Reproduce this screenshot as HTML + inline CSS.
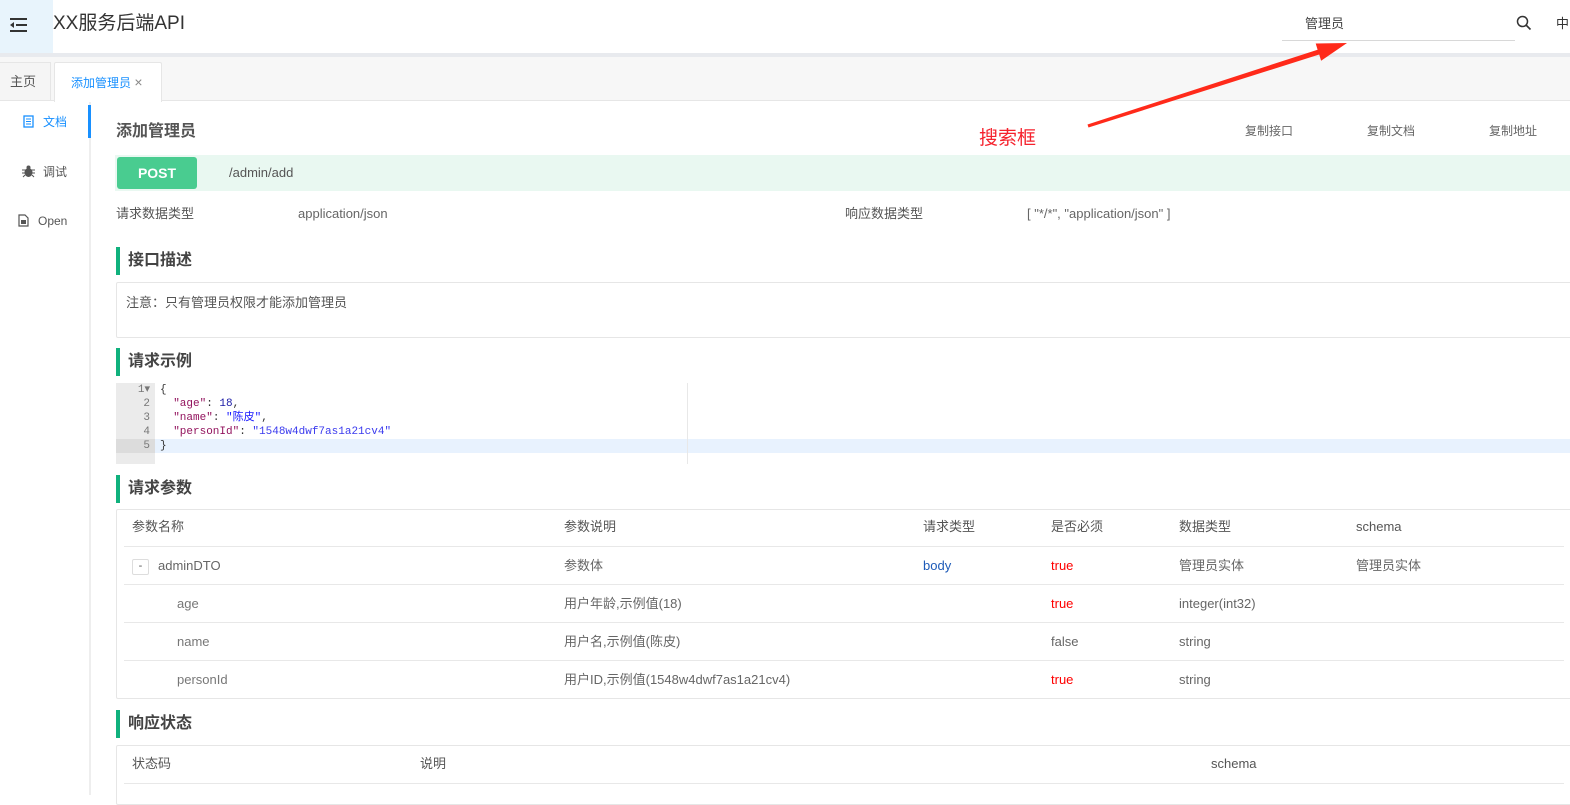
<!DOCTYPE html>
<html><head><meta charset="utf-8">
<style>
*{margin:0;padding:0;box-sizing:border-box}
body{width:1570px;height:795px;overflow:hidden;background:#fff;font-family:"Liberation Sans","Noto Sans CJK SC",sans-serif;color:#555;font-size:13px;position:relative}
.a{position:absolute;white-space:nowrap;line-height:16px}
.h2{position:absolute;left:116px;height:28px;border-left:4px solid #10b17d;padding-left:8px;font-size:16px;font-weight:bold;color:#444;line-height:28px}
.box{position:absolute;left:116px;width:1460px;border:1px solid #e6e6e6;border-radius:2px}
.line{position:absolute;height:1px;background:#e8e8e8}
.code{font-family:"Liberation Mono","Noto Sans CJK SC",monospace;font-size:11px}
</style></head><body>
<!-- header -->
<div class="a" style="left:0;top:0;width:53px;height:54px;background:#e8f4fc"></div>
<svg class="a" style="left:10px;top:17px" width="18" height="16" viewBox="0 0 18 16"><rect x="0" y="1" width="17" height="2" fill="#333"/><rect x="6" y="7" width="11" height="2" fill="#333"/><rect x="0" y="13" width="17" height="2" fill="#333"/><path d="M0 8L4 5V11Z" fill="#333"/></svg>
<div class="a" style="left:53px;top:13px;font-size:19px;line-height:22px;color:#333">XX服务后端API</div>
<div class="a" style="left:1305px;top:16px;font-size:13px;color:#444">管理员</div>
<div class="line" style="left:1282px;top:40px;width:233px;background:#d8d8d8"></div>
<svg class="a" style="left:1516px;top:15px" width="16" height="16" viewBox="0 0 16 16"><circle cx="6.5" cy="6.5" r="5" fill="none" stroke="#333" stroke-width="1.5"/><path d="M10 10L14.5 14.5" stroke="#333" stroke-width="1.6"/></svg>
<div class="a" style="left:1556px;top:16px;font-size:13px;color:#333">中</div>
<div class="a" style="left:0;top:53px;width:1570px;height:4px;background:#e8eaee"></div>
<!-- tabs -->
<div class="a" style="left:0;top:57px;width:1570px;height:44px;background:#f7f7f7;border-bottom:1px solid #e6e6e6"></div>
<div class="a" style="left:0;top:62px;width:51px;height:39px;background:#f5f5f5;border:1px solid #e6e6e6;border-left:none;font-size:13px;color:#555;line-height:38px;padding-left:10px">主页</div>
<div class="a" style="left:54px;top:62px;width:108px;height:40px;background:#fff;border:1px solid #e6e6e6;border-bottom:none;border-radius:2px 2px 0 0;font-size:12px;color:#1890ff;line-height:38px;padding-left:16px">添加管理员 <span style="color:#888;font-size:14px">×</span></div>
<!-- sidebar -->
<div class="a" style="left:89px;top:102px;width:2px;height:693px;background:#eee"></div>
<div class="a" style="left:88px;top:105px;width:3px;height:33px;background:#1890ff"></div>
<svg class="a" style="left:23px;top:115px" width="11" height="13" viewBox="0 0 11 13"><rect x="1" y="1" width="9" height="11" fill="none" stroke="#1890ff" stroke-width="1.3"/><path d="M3 4H8M3 6.5H8M3 9H8" stroke="#1890ff"/></svg>
<div class="a" style="left:43px;top:114px;font-size:12px;color:#1890ff">文档</div>
<svg class="a" style="left:22px;top:165px" width="13" height="13" viewBox="0 0 13 13"><ellipse cx="6.5" cy="7.5" rx="4" ry="4.5" fill="#555"/><circle cx="6.5" cy="2.5" r="2" fill="#555"/><path d="M0 5H13M0 8H13M1 12L3 10M12 12L10 10" stroke="#555"/></svg>
<div class="a" style="left:43px;top:164px;font-size:12px;color:#555">调试</div>
<svg class="a" style="left:18px;top:214px" width="11" height="13" viewBox="0 0 11 13"><path d="M1 1H7L10 4V12H1Z" fill="none" stroke="#555" stroke-width="1.2"/><rect x="3" y="6" width="5" height="4" fill="#555"/></svg>
<div class="a" style="left:38px;top:213px;font-size:12px;color:#555">Open</div>
<!-- title -->
<div class="a" style="left:116px;top:122px;font-size:16px;line-height:20px;font-weight:bold;color:#555">添加管理员</div>
<div class="a" style="left:1245px;top:123px;font-size:12px;color:#666">复制接口</div>
<div class="a" style="left:1367px;top:123px;font-size:12px;color:#666">复制文档</div>
<div class="a" style="left:1489px;top:123px;font-size:12px;color:#666">复制地址</div>
<div class="a" style="left:979px;top:127px;font-size:19px;line-height:24px;color:#f5222d">搜索框</div>
<svg class="a" style="left:0;top:0" width="1570" height="795" viewBox="0 0 1570 795"><path d="M1087.5 124.5L1317.6 49.7L1315.7 43.5L1347 43L1321.1 60.7L1319.2 54.5L1088.5 127.5Z" fill="#ff2a1a"/></svg>
<!-- post bar -->
<div class="a" style="left:115px;top:155px;width:1455px;height:36px;background:#e9f8f1"></div>
<div class="a" style="left:117px;top:157px;width:80px;height:32px;background:#49cc90;border-radius:3px;color:#fff;font-weight:bold;font-size:14px;text-align:center;line-height:32px">POST</div>
<div class="a" style="left:229px;top:165px;font-size:13px;color:#555">/admin/add</div>
<div class="a" style="left:116px;top:206px;font-size:13px;color:#555">请求数据类型</div>
<div class="a" style="left:298px;top:206px;font-size:13px;color:#666">application/json</div>
<div class="a" style="left:845px;top:206px;font-size:13px;color:#555">响应数据类型</div>
<div class="a" style="left:1027px;top:206px;font-size:13px;color:#666">[ "*/*", "application/json" ]</div>
<!-- desc -->
<div class="h2" style="top:247px">接口描述</div>
<div class="box" style="top:282px;height:56px"></div>
<div class="a" style="left:126px;top:295px;font-size:13px;color:#555">注意：只有管理员权限才能添加管理员</div>
<!-- example -->
<div class="h2" style="top:348px">请求示例</div>
<div class="a" style="left:116px;top:383px;width:39px;height:81px;background:#ebebeb"></div>
<div class="a" style="left:116px;top:439px;width:1454px;height:14px;background:#e8f2fe"></div>
<div class="a" style="left:116px;top:439px;width:39px;height:14px;background:#dcdcdc"></div>
<div class="a" style="left:687px;top:383px;width:1px;height:81px;background:#e8e8e8"></div>
<div class="a code" style="left:116px;top:383px;width:34px;text-align:right;color:#777;line-height:14px">1▾<br>2<br>3<br>4<br>5</div>
<div class="a code" style="left:160px;top:383px;line-height:14px;color:#333">{<br>&nbsp;&nbsp;<span style="color:#92125d">"age"</span>: <span style="color:#1a1aa6">18</span>,<br>&nbsp;&nbsp;<span style="color:#92125d">"name"</span>: <span style="color:#1a1aff">"陈皮"</span>,<br>&nbsp;&nbsp;<span style="color:#92125d">"personId"</span>: <span style="color:#3a3aee">"1548w4dwf7as1a21cv4"</span><br>}</div>
<!-- params -->
<div class="h2" style="top:475px">请求参数</div>
<div class="box" style="top:509px;height:190px"></div>
<div class="line" style="left:124px;top:546px;width:1440px"></div>
<div class="line" style="left:124px;top:584px;width:1440px"></div>
<div class="line" style="left:124px;top:622px;width:1440px"></div>
<div class="line" style="left:124px;top:660px;width:1440px"></div>
<div class="a" style="left:132px;top:519px">参数名称</div>
<div class="a" style="left:564px;top:519px">参数说明</div>
<div class="a" style="left:923px;top:519px">请求类型</div>
<div class="a" style="left:1051px;top:519px">是否必须</div>
<div class="a" style="left:1179px;top:519px">数据类型</div>
<div class="a" style="left:1356px;top:519px">schema</div>
<div class="a" style="left:132px;top:559px;width:17px;height:16px;border:1px solid #ddd;border-radius:2px;text-align:center;line-height:13px;font-size:11px">-</div>
<div class="a" style="left:158px;top:558px;color:#666">adminDTO</div>
<div class="a" style="left:564px;top:558px;color:#666">参数体</div>
<div class="a" style="left:923px;top:558px;color:#1e5bb8">body</div>
<div class="a" style="left:1051px;top:558px;color:#f00">true</div>
<div class="a" style="left:1179px;top:558px;color:#666">管理员实体</div>
<div class="a" style="left:1356px;top:558px;color:#666">管理员实体</div>
<div class="a" style="left:177px;top:596px;color:#777">age</div>
<div class="a" style="left:564px;top:596px;color:#666">用户年龄,示例值(18)</div>
<div class="a" style="left:1051px;top:596px;color:#f00">true</div>
<div class="a" style="left:1179px;top:596px;color:#666">integer(int32)</div>
<div class="a" style="left:177px;top:634px;color:#777">name</div>
<div class="a" style="left:564px;top:634px;color:#666">用户名,示例值(陈皮)</div>
<div class="a" style="left:1051px;top:634px;color:#666">false</div>
<div class="a" style="left:1179px;top:634px;color:#666">string</div>
<div class="a" style="left:177px;top:672px;color:#777">personId</div>
<div class="a" style="left:564px;top:672px;color:#666">用户ID,示例值(1548w4dwf7as1a21cv4)</div>
<div class="a" style="left:1051px;top:672px;color:#f00">true</div>
<div class="a" style="left:1179px;top:672px;color:#666">string</div>
<!-- response -->
<div class="h2" style="top:710px">响应状态</div>
<div class="box" style="top:745px;height:60px"></div>
<div class="line" style="left:124px;top:783px;width:1440px"></div>
<div class="a" style="left:132px;top:756px">状态码</div>
<div class="a" style="left:420px;top:756px">说明</div>
<div class="a" style="left:1211px;top:756px">schema</div>
</body></html>
